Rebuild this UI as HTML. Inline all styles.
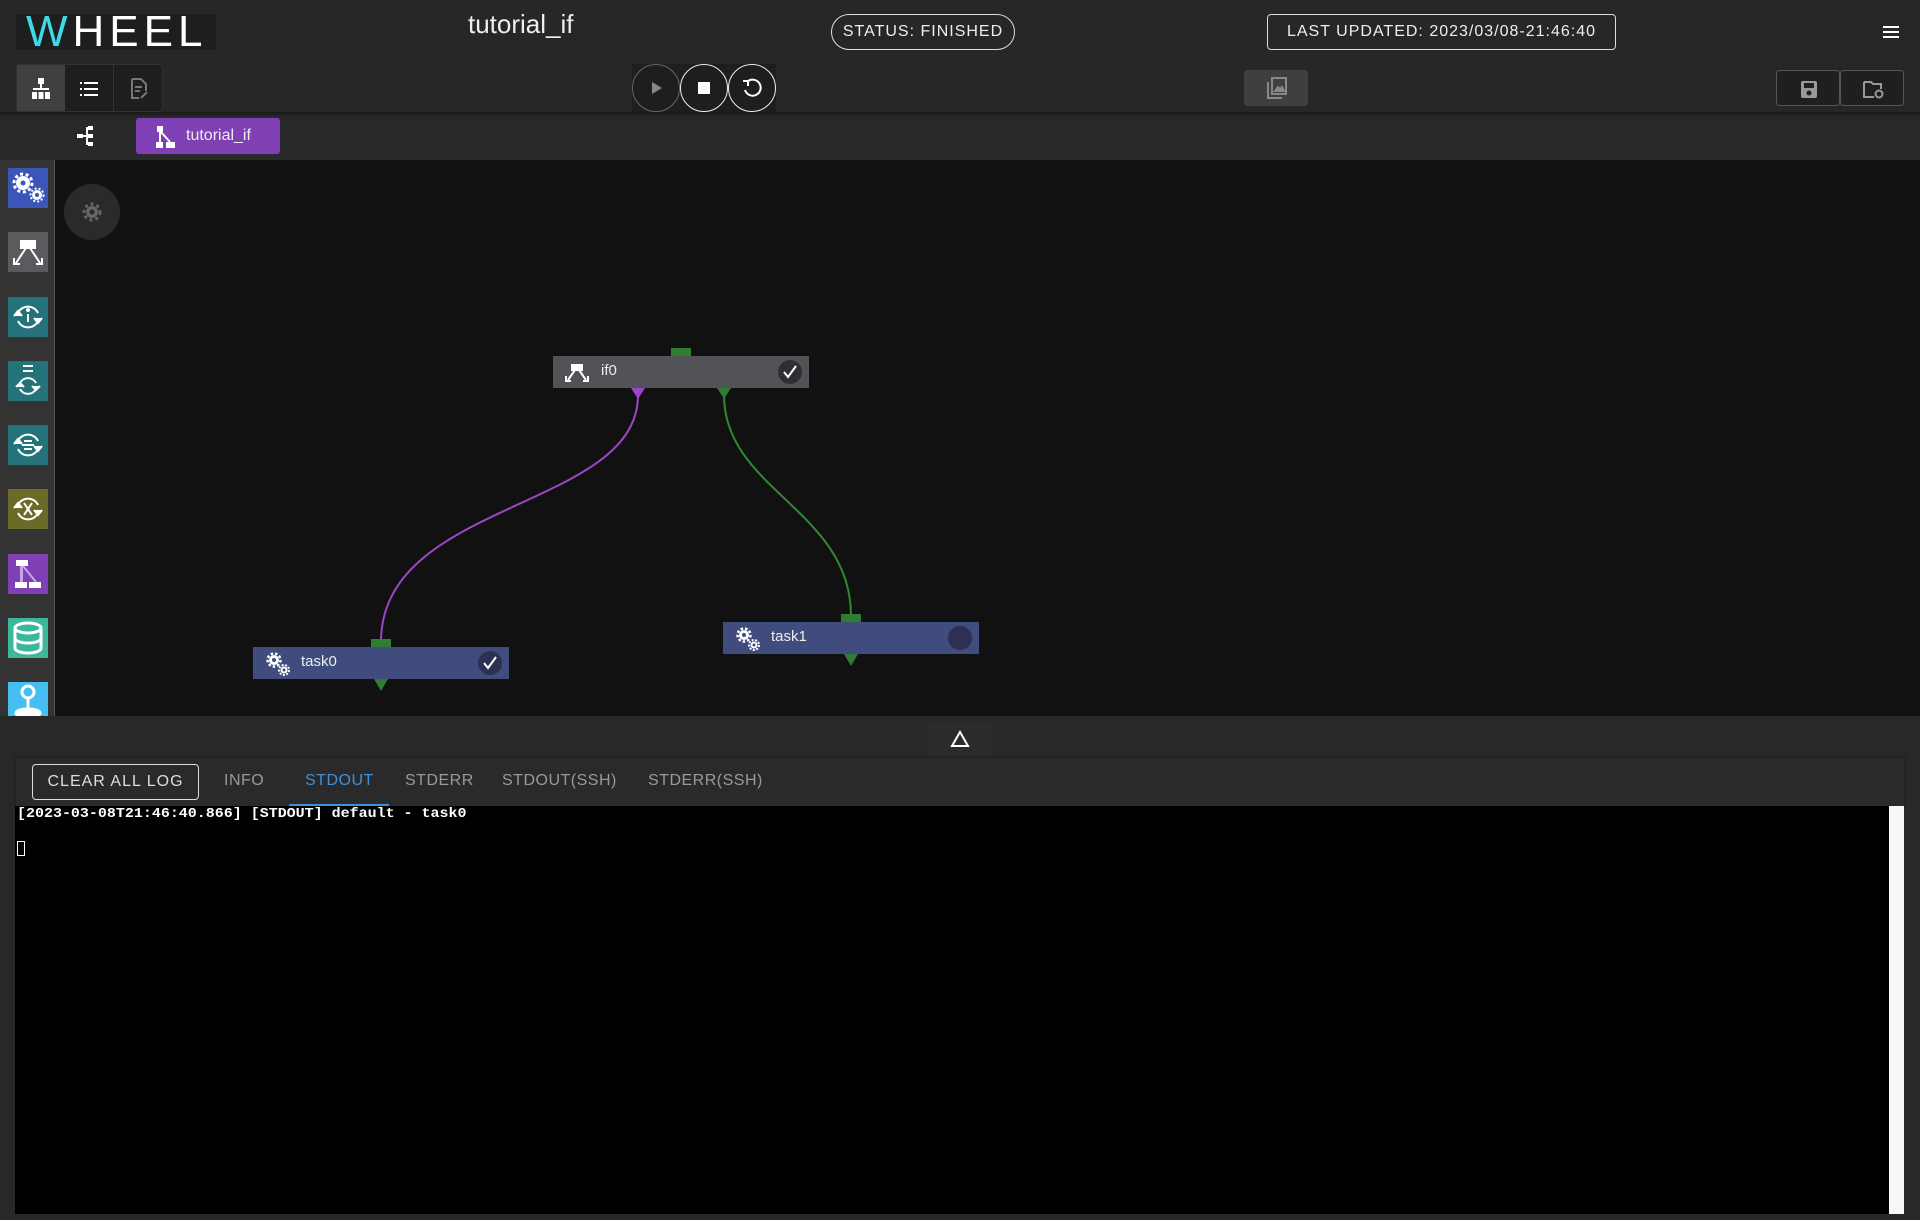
<!DOCTYPE html>
<html><head><meta charset="utf-8"><style>
*{box-sizing:border-box;margin:0;padding:0}
body{width:1920px;height:1220px;background:#282828;font-family:"Liberation Sans",sans-serif;color:#fff;position:relative;overflow:hidden}
.a{position:absolute}
.hdr{left:0;top:0;width:1920px;height:112px;background:#272727;box-shadow:0 2px 4px rgba(0,0,0,.5);z-index:2}
.logo{left:16px;top:14px;width:200px;height:36px;background:#1e1e1e;font-size:44px;line-height:36px;padding-left:10px;letter-spacing:5px;font-weight:300;transform-origin:left;}
.pill{border:1.5px solid #ddd;font-size:16px;letter-spacing:1px;display:flex;align-items:center;justify-content:center;color:#eee}
.crumb{left:0;top:112px;width:1920px;height:48px;background:#292929}
.canvas{left:55px;top:160px;width:1865px;height:556px;background:#111}
.side{left:0;top:160px;width:55px;height:556px;background:#333;border-right:1px solid #555}
.ic{left:8px;width:40px;height:40px}
.node{height:32px;color:#eee;font-size:15px;line-height:26px}
.tab{font-size:16px;letter-spacing:0.5px;color:#999;top:772px}
</style></head><body>
<div class="a hdr">
 <div class="a logo"><span style="color:#3fd9e8">W</span>HEEL</div>
 <div class="a" style="left:468px;top:9px;font-size:26px;color:#eee">tutorial_if</div>
 <div class="a pill" style="left:831px;top:14px;width:184px;height:36px;border-radius:18px">STATUS: FINISHED</div>
 <div class="a pill" style="left:1267px;top:14px;width:349px;height:36px;border-radius:4px">LAST UPDATED: 2023/03/08-21:46:40</div>
 <div class="a" style="left:1883px;top:26px;width:16px;height:2px;background:#fff;box-shadow:0 5px 0 #fff,0 10px 0 #fff"></div>
 <div class="a" style="left:16px;top:64px;width:147px;height:48px;background:#1e1e1e;border:1px solid #333;border-radius:4px;display:flex">
  <div style="width:49px;background:#404040;position:relative"><svg class="a" style="left:14px;top:13px" width="20" height="22" viewBox="0 0 20 22" fill="#fff"><rect x="7" y="0" width="6" height="6"/><rect x="9" y="6" width="2" height="5"/><rect x="2" y="10" width="16" height="2"/><rect x="1" y="14" width="5" height="7"/><rect x="7.5" y="14" width="5" height="7"/><rect x="14" y="14" width="5" height="7"/></svg></div>
  <div style="width:49px;border-right:1px solid #333;position:relative"><svg class="a" style="left:15px;top:16px" width="18" height="16" fill="#fff"><rect y="1" width="2" height="2"/><rect x="4" y="1" width="14" height="2"/><rect y="7" width="2" height="2"/><rect x="4" y="7" width="14" height="2"/><rect y="13" width="2" height="2"/><rect x="4" y="13" width="14" height="2"/></svg></div>
  <div style="width:49px;position:relative"><svg class="a" style="left:16px;top:13px" width="18" height="22" fill="none" stroke="#777" stroke-width="2"><path d="M2 1h9l5 5v7M2 1v19h7M5 9h7M5 13h5M11 20l6-6"/></svg></div>
 </div>
 <div class="a" style="left:632px;top:64px;width:144px;height:48px;background:#1e1e1e">
  <div class="a" style="left:0;top:0;width:48px;height:48px;border:1px solid #666;border-radius:50%"></div>
  <div class="a" style="left:20px;top:18px;border-left:10px solid #888;border-top:6px solid transparent;border-bottom:6px solid transparent"></div>
  <div class="a" style="left:48px;top:0;width:48px;height:48px;border:1.5px solid #eee;border-radius:50%"></div>
  <div class="a" style="left:66px;top:18px;width:12px;height:12px;background:#fff"></div>
  <div class="a" style="left:96px;top:0;width:48px;height:48px;border:1.5px solid #eee;border-radius:50%"></div>
  <svg class="a" style="left:109px;top:13px" width="22" height="22" fill="none" stroke="#fff" stroke-width="2"><path d="M6 5A8 8 0 1 1 4 13"/><path d="M2 4h5v5" /></svg>
 </div>
 <div class="a" style="left:1244px;top:70px;width:64px;height:36px;background:#3f3f3f;border-radius:3px"><svg class="a" style="left:22px;top:7px" width="22" height="22" fill="none" stroke="#888" stroke-width="2"><rect x="6" y="1" width="14" height="16"/><path d="M2 5v16h14"/><path d="M9 14l3-4 2 2 2-2 2 4z" fill="#888"/></svg></div>
 <div class="a" style="left:1776px;top:70px;width:64px;height:36px;border:1px solid #555;border-radius:4px;background:#1f1f1f"><svg class="a" style="left:24px;top:10px" width="16" height="17"><rect width="16" height="17" rx="2" fill="#999"/><rect x="3" y="2" width="10" height="5" fill="#1f1f1f"/><circle cx="8" cy="12" r="2.5" fill="#1f1f1f"/></svg></div>
 <div class="a" style="left:1840px;top:70px;width:64px;height:36px;border:1px solid #555;border-radius:4px;background:#1f1f1f"><svg class="a" style="left:22px;top:9px" width="22" height="19" fill="none" stroke="#999" stroke-width="2"><path d="M1 2h7l2 2h8v5M1 2v15h10"/><circle cx="16" cy="14" r="3.5"/></svg></div>
</div>
<div class="a crumb">
 <svg class="a" style="left:77px;top:13px" width="22" height="22" fill="#fff"><rect x="0" y="9" width="6" height="4"/><rect x="6" y="10" width="5" height="2"/><rect x="9" y="2" width="2" height="18"/><rect x="11" y="1" width="5" height="4"/><rect x="11" y="9" width="5" height="4"/><rect x="11" y="17" width="5" height="4"/></svg>
 <div class="a" style="left:136px;top:6px;width:144px;height:36px;background:#7f3fb5;border-radius:3px;font-size:16px;line-height:36px;padding-left:50px;color:#eee">tutorial_if</div>
 <svg class="a" style="left:156px;top:14px" width="22" height="22" fill="#fff"><rect x="1" y="0" width="6" height="6"/><rect x="0" y="16" width="7" height="6"/><rect x="10" y="16" width="9" height="6"/><rect x="3" y="6" width="2" height="10"/><path d="M5 6l9 10" stroke="#fff" stroke-width="2"/></svg>
</div>
<div class="a canvas"></div>
<div class="a side">
 <div class="a ic" style="top:8px;background:#3b55b8"><svg width="40" height="40" fill="#fff"><circle cx="15" cy="15" r="7"/><circle cx="15" cy="15" r="9" fill="none" stroke="#fff" stroke-width="3" stroke-dasharray="3 2.6"/><circle cx="15" cy="15" r="2.5" fill="#3b55b8"/><circle cx="29" cy="27" r="5"/><circle cx="29" cy="27" r="6.5" fill="none" stroke="#fff" stroke-width="2" stroke-dasharray="2 2"/><circle cx="29" cy="27" r="2" fill="#3b55b8"/></svg></div>
 <div class="a ic" style="top:72px;background:#5a5a5f"><svg width="40" height="40" fill="none" stroke="#fff" stroke-width="2"><rect x="13" y="9" width="14" height="7" fill="#fff"/><path d="M18 16l-10 15M22 16l10 15"/><path d="M6 26v6h6M34 26v6h-6"/></svg></div>
 <div class="a ic" style="top:137px;background:#24737a"><svg width="40" height="40" fill="none" stroke="#fff" stroke-width="2"><path d="M10 16a11 11 0 0 1 20 0M30 24a11 11 0 0 1-20 0"/><path d="M6 19l4 -5 4 5M26 21l4 5 4-5" fill="#fff"/><path d="M20 17v8"/><circle cx="20" cy="13" r="1" fill="#fff"/></svg></div>
 <div class="a ic" style="top:201px;background:#24737a"><svg width="40" height="40" fill="none" stroke="#fff" stroke-width="2"><path d="M15 5h10M15 10h10"/><path d="M12 22a9 9 0 0 1 16 0M28 28a9 9 0 0 1-16 0"/><path d="M8 26l4-4 4 4M24 25l4 4 4-4" fill="#fff"/></svg></div>
 <div class="a ic" style="top:265px;background:#24737a"><svg width="40" height="40" fill="none" stroke="#fff" stroke-width="2"><path d="M10 16a11 11 0 0 1 20 0M30 24a11 11 0 0 1-20 0"/><path d="M6 19l4-5 4 5M26 21l4 5 4-5" fill="#fff"/><path d="M16 16h8M14 20h12M16 24h8"/></svg></div>
 <div class="a ic" style="top:329px;background:#6b6a26"><svg width="40" height="40" fill="none" stroke="#fff" stroke-width="2"><path d="M10 16a11 11 0 0 1 20 0M30 24a11 11 0 0 1-20 0"/><path d="M6 19l4-5 4 5M26 21l4 5 4-5" fill="#fff"/><path d="M16 14l8 12M24 14l-8 12"/></svg></div>
 <div class="a ic" style="top:394px;background:#7f3fb5"><svg width="40" height="40" fill="#fff"><rect x="8" y="6" width="12" height="6"/><rect x="7" y="28" width="12" height="6"/><rect x="21" y="28" width="12" height="6"/><rect x="12" y="12" width="3" height="16" fill="#c9a6e6"/><path d="M15 12l13 16" stroke="#c9a6e6" stroke-width="2"/></svg></div>
 <div class="a ic" style="top:458px;background:#3bb89a"><svg width="40" height="40" fill="none" stroke="#fff" stroke-width="3"><ellipse cx="20" cy="10" rx="13" ry="5"/><path d="M7 10v20c0 3 6 5 13 5s13-2 13-5V10M7 20c0 3 6 5 13 5s13-2 13-5"/></svg></div>
 <div class="a ic" style="top:522px;background:#45bff0;height:34px"><svg width="40" height="34" fill="none" stroke="#fff" stroke-width="3"><circle cx="20" cy="10" r="6"/><path d="M20 16v12"/><ellipse cx="20" cy="31" rx="12" ry="4" fill="#fff"/></svg></div>
</div>
<div class="a" style="left:64px;top:184px;width:56px;height:56px;border-radius:50%;background:#2a2a2a"></div>
<svg class="a" style="left:82px;top:202px" width="20" height="20"><circle cx="10" cy="10" r="6" fill="#666"/><circle cx="10" cy="10" r="8" fill="none" stroke="#666" stroke-width="3" stroke-dasharray="3 3"/><circle cx="10" cy="10" r="2.5" fill="#2a2a2a"/></svg>
<svg class="a" style="left:0;top:0" width="1920" height="716">
 <path d="M638 395C638 510 381 500 381 642" stroke="#9c45c8" stroke-width="2" fill="none"/>
 <path d="M724 395C724 490 851 510 851 616" stroke="#2f8a2f" stroke-width="2" fill="none"/>
 <rect x="671" y="348" width="20" height="8" fill="#2f7d32"/>
 <rect x="371" y="639" width="20" height="8" fill="#2f7d32"/>
 <rect x="841" y="614" width="20" height="8" fill="#2f7d32"/>
 <path d="M631 388h14l-7 11z" fill="#9c45c8"/>
 <path d="M717 388h14l-7 11z" fill="#2f7d32"/>
 <path d="M374 679h14l-7 12z" fill="#2f7d32"/>
 <path d="M844 654h14l-7 12z" fill="#2f7d32"/>
</svg>
<div class="a node" style="left:553px;top:356px;width:256px;background:#525257"><span class="a" style="left:48px;top:2px">if0</span>
 <svg class="a" style="left:12px;top:8px" width="24" height="18" fill="none" stroke="#fff" stroke-width="2"><rect x="7" y="0" width="10" height="6" fill="#fff"/><path d="M10 6l-7 10M14 6l7 10M1 12v5h5M23 12v5h-5"/></svg>
 <div class="a" style="left:225px;top:4px;width:24px;height:24px;border-radius:50%;background:#2e2e33"></div>
 <svg class="a" style="left:229px;top:8px" width="16" height="16" fill="none" stroke="#fff" stroke-width="2"><path d="M2 8l4 5 8-11"/></svg></div>
<div class="a node" style="left:253px;top:647px;width:256px;background:#3f4c7d"><span class="a" style="left:48px;top:2px">task0</span>
 <svg class="a" style="left:12px;top:4px" width="26" height="26" fill="#fff"><circle cx="9" cy="9" r="5"/><circle cx="9" cy="9" r="6.5" fill="none" stroke="#fff" stroke-width="2.5" stroke-dasharray="2.5 2"/><circle cx="9" cy="9" r="2" fill="#3f4c7d"/><circle cx="19" cy="19" r="3.5"/><circle cx="19" cy="19" r="5" fill="none" stroke="#fff" stroke-width="2" stroke-dasharray="2 1.5"/><circle cx="19" cy="19" r="1.5" fill="#3f4c7d"/></svg>
 <div class="a" style="left:225px;top:4px;width:24px;height:24px;border-radius:50%;background:#2c3153"></div>
 <svg class="a" style="left:229px;top:8px" width="16" height="16" fill="none" stroke="#fff" stroke-width="2"><path d="M2 8l4 5 8-11"/></svg></div>
<div class="a node" style="left:723px;top:622px;width:256px;background:#3f4c7d"><span class="a" style="left:48px;top:2px">task1</span>
 <svg class="a" style="left:12px;top:4px" width="26" height="26" fill="#fff"><circle cx="9" cy="9" r="5"/><circle cx="9" cy="9" r="6.5" fill="none" stroke="#fff" stroke-width="2.5" stroke-dasharray="2.5 2"/><circle cx="9" cy="9" r="2" fill="#3f4c7d"/><circle cx="19" cy="19" r="3.5"/><circle cx="19" cy="19" r="5" fill="none" stroke="#fff" stroke-width="2" stroke-dasharray="2 1.5"/><circle cx="19" cy="19" r="1.5" fill="#3f4c7d"/></svg>
 <div class="a" style="left:225px;top:4px;width:24px;height:24px;border-radius:50%;background:#2c3153"></div></div>
<div class="a" style="left:928px;top:722px;width:64px;height:35px;background:#2b2b2b"><svg class="a" style="left:22px;top:8px" width="20" height="18" fill="none" stroke="#fff" stroke-width="2"><path d="M10 2L2 16h16z"/></svg></div>
<div class="a" style="left:16px;top:758px;width:1888px;height:48px;background:#2a2a2a;box-shadow:0 0 4px rgba(0,0,0,.4)"></div>
<div class="a pill" style="left:32px;top:764px;width:167px;height:36px;border-radius:4px;color:#ddd">CLEAR ALL LOG</div>
<div class="a tab" style="left:224px">INFO</div>
<div class="a tab" style="left:305px;color:#3f8fdc">STDOUT</div>
<div class="a" style="left:289px;top:804px;width:100px;height:2px;background:#3f8fdc"></div>
<div class="a tab" style="left:405px">STDERR</div>
<div class="a tab" style="left:502px">STDOUT(SSH)</div>
<div class="a tab" style="left:648px">STDERR(SSH)</div>
<div class="a" style="left:15px;top:806px;width:1874px;height:408px;background:#000"></div>
<div class="a" style="left:1889px;top:806px;width:15px;height:408px;background:#f8f8f8"></div>
<div class="a" style="left:17px;top:804px;font-family:'Liberation Mono',monospace;font-weight:bold;font-size:14px;line-height:20px;color:#fff;transform:scaleX(1.07);transform-origin:left">[2023-03-08T21:46:40.866] [STDOUT] default - task0</div>
<div class="a" style="left:17px;top:841px;width:8px;height:15px;border:1px solid #fff"></div>
</body></html>
